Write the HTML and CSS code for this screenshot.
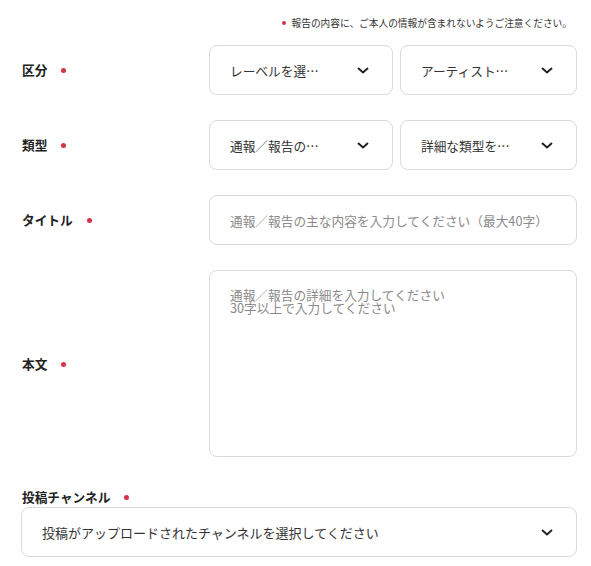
FILE: index.html
```html
<!DOCTYPE html>
<html lang="ja">
<head>
    <meta charset="UTF-8">
    <meta name="viewport" content="width=device-width, initial-scale=1.0">
    <title>通報／報告</title>
    <link rel="stylesheet" href="styles.css">
</head>
<body>
    <form class="report">
        <p class="notice"><span class="dot"></span>報告の内容に、ご本人の情報が含まれないようご注意ください。</p>

        <div class="rows">
            <div class="row">
                <label class="label">区分<span class="dot"></span></label>
                <div class="pair">
                    <div class="select"><span>レーベルを選…</span><svg class="chevron" viewBox="0 0 12 7"><polyline points="1,1 6,5.5 11,1"/></svg></div>
                    <div class="select"><span>アーティスト…</span><svg class="chevron" viewBox="0 0 12 7"><polyline points="1,1 6,5.5 11,1"/></svg></div>
                </div>
            </div>

            <div class="row">
                <label class="label">類型<span class="dot"></span></label>
                <div class="pair">
                    <div class="select"><span>通報／報告の…</span><svg class="chevron" viewBox="0 0 12 7"><polyline points="1,1 6,5.5 11,1"/></svg></div>
                    <div class="select"><span>詳細な類型を…</span><svg class="chevron" viewBox="0 0 12 7"><polyline points="1,1 6,5.5 11,1"/></svg></div>
                </div>
            </div>

            <div class="row">
                <label class="label" for="title">タイトル<span class="dot"></span></label>
                <input class="field" id="title" type="text" placeholder="通報／報告の主な内容を入力してください（最大40字）">
            </div>

            <div class="row">
                <label class="label" for="body">本文<span class="dot"></span></label>
                <textarea class="field area" id="body" placeholder="通報／報告の詳細を入力してください&#10;30字以上で入力してください"></textarea>
            </div>
        </div>

        <div class="channel">
            <label class="label">投稿チャンネル<span class="dot"></span></label>
            <div class="select wide"><span>投稿がアップロードされたチャンネルを選択してください</span><svg class="chevron" viewBox="0 0 12 7"><polyline points="1,1 6,5.5 11,1"/></svg></div>
        </div>
    </form>
</body>
</html>
```

FILE: styles.css
```css
body {
    margin: 0;
    background: #ffffff;
    font-family: "Noto Sans CJK JP", "Noto Sans", sans-serif;
    color: #222222;
}
.report {
    padding: 16px 14px 0 21px;
}
.notice {
    margin: 0 5px 15px 0;
    font-size: 9.7px;
    line-height: 14px;
    color: #333333;
    text-align: right;
}
.notice .dot {
    margin: 0 6px 2px 0;
    width: 4px;
    height: 4px;
}
.dot {
    display: inline-block;
    width: 5px;
    height: 5px;
    border-radius: 50%;
    background: #d9314a;
    vertical-align: middle;
}
.rows {
    display: flex;
    flex-direction: column;
    gap: 25px;
}
.row {
    display: grid;
    grid-template-columns: 188px 1fr;
    align-items: center;
}
.label {
    padding-left: 1px;
    font-size: 12.7px;
    font-weight: bold;
    line-height: 16px;
}
.label .dot {
    margin: 0 0 2px 14px;
}
.pair {
    display: grid;
    grid-template-columns: 184px 1fr;
    gap: 7px;
}
.select {
    display: flex;
    align-items: center;
    justify-content: space-between;
    height: 50px;
    box-sizing: border-box;
    padding: 0 23px 0 20px;
    border: 1px solid #dadada;
    border-radius: 8px;
    font-size: 12.7px;
    color: #333333;
    white-space: nowrap;
}
.select.wide {
    font-size: 13px;
}
.chevron {
    width: 12px;
    height: 7px;
    flex: none;
}
.chevron polyline {
    fill: none;
    stroke: #222222;
    stroke-width: 2;
}
.field {
    height: 50px;
    box-sizing: border-box;
    margin: 0;
    padding: 0 20px;
    border: 1px solid #dadada;
    border-radius: 8px;
    font-family: inherit;
    font-size: 12.7px;
    color: #333333;
    outline: none;
}
.field::placeholder {
    color: #8a8a8a;
}
.area {
    height: 187px;
    padding: 18px 20px;
    line-height: 1;
    resize: none;
}
.channel {
    margin-top: 32px;
    display: flex;
    flex-direction: column;
    gap: 2px;
}
```
